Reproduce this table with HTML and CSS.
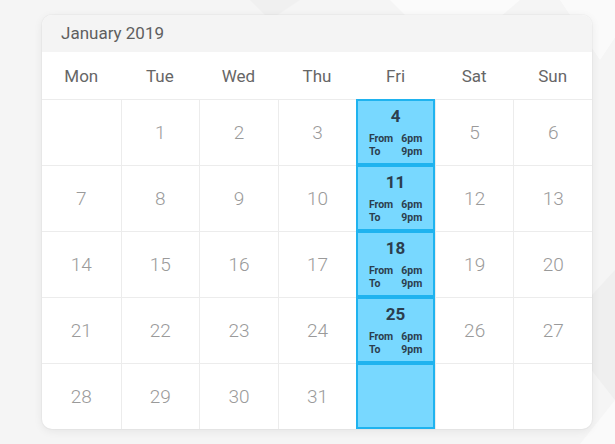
FILE: index.html
```html
<!DOCTYPE html>
<html lang="en">
<head>
<meta charset="utf-8">
<title>January 2019</title>
<link rel="stylesheet" href="styles.css">
</head>
<body>
<div class="card">
  <div class="card-header">January 2019</div>
  <div class="weekdays">
    <div>Mon</div><div>Tue</div><div>Wed</div><div>Thu</div><div>Fri</div><div>Sat</div><div>Sun</div>
  </div>
  <div class="grid">
    <div class="cell"></div>
    <div class="cell">1</div>
    <div class="cell">2</div>
    <div class="cell">3</div>
    <div class="cell event"><span class="ev-date">4</span><span class="ev-time"><span>From</span><span>6pm</span><span>To</span><span>9pm</span></span></div>
    <div class="cell">5</div>
    <div class="cell">6</div>

    <div class="cell">7</div>
    <div class="cell">8</div>
    <div class="cell">9</div>
    <div class="cell">10</div>
    <div class="cell event"><span class="ev-date">11</span><span class="ev-time"><span>From</span><span>6pm</span><span>To</span><span>9pm</span></span></div>
    <div class="cell">12</div>
    <div class="cell">13</div>

    <div class="cell">14</div>
    <div class="cell">15</div>
    <div class="cell">16</div>
    <div class="cell">17</div>
    <div class="cell event"><span class="ev-date">18</span><span class="ev-time"><span>From</span><span>6pm</span><span>To</span><span>9pm</span></span></div>
    <div class="cell">19</div>
    <div class="cell">20</div>

    <div class="cell">21</div>
    <div class="cell">22</div>
    <div class="cell">23</div>
    <div class="cell">24</div>
    <div class="cell event"><span class="ev-date">25</span><span class="ev-time"><span>From</span><span>6pm</span><span>To</span><span>9pm</span></span></div>
    <div class="cell">26</div>
    <div class="cell">27</div>

    <div class="cell">28</div>
    <div class="cell">29</div>
    <div class="cell">30</div>
    <div class="cell">31</div>
    <div class="cell event"></div>
    <div class="cell"></div>
    <div class="cell"></div>
  </div>
</div>
</body>
</html>
```

FILE: styles.css
```css
* { box-sizing: border-box; }

html, body {
  margin: 0;
  height: 100%;
}

body {
  font-family: Roboto, "Liberation Sans", sans-serif;
  background-color: #f5f5f5;
  background-image: url("data:image/svg+xml,%3Csvg xmlns='http://www.w3.org/2000/svg' width='615' height='444'%3E%3Cpolygon points='390,0 450,60 520,0' fill='%23fbfbfb'/%3E%3Cpolygon points='250,0 300,0 270,20' fill='%23f0f0f0'/%3E%3Cpolygon points='640,0 560,0 600,60' fill='%23fafafa'/%3E%3Cpolygon points='615,270 560,330 615,400' fill='%23efefef'/%3E%3Cpolygon points='615,400 580,444 615,444' fill='%23fafafa'/%3E%3C/svg%3E");
  background-repeat: no-repeat;
  padding: 15px 0 0 42px;
}

.card {
  width: 550px;
  background: #fff;
  border-radius: 10px;
  overflow: hidden;
  box-shadow: 0 2px 10px rgba(0, 0, 0, 0.07), 0 0 0 1px rgba(0, 0, 0, 0.025);
}

.card-header {
  height: 37px;
  background: #f4f4f4;
  color: #5f5f5f;
  font-size: 17px;
  line-height: 37px;
  padding-left: 19px;
}

.weekdays {
  display: grid;
  grid-template-columns: repeat(7, 1fr);
  height: 47px;
  align-items: center;
  text-align: center;
  color: #666;
  font-size: 17px;
}

.grid {
  display: grid;
  grid-template-columns: repeat(7, 1fr);
  grid-auto-rows: 66px;
}

.cell {
  border-top: 1px solid #ececec;
  border-left: 1px solid #ececec;
  display: flex;
  align-items: center;
  justify-content: center;
  color: #9a9a9a;
  font-size: 19px;
  font-weight: 300;
}

.cell:nth-child(7n+1) {
  border-left: none;
}

.cell.event {
  background: #78d8ff;
  border: 2px solid #1fb3ef;
  flex-direction: column;
  justify-content: flex-start;
  padding-top: 5px;
  color: #2c3e4e;
}

.ev-date {
  font-size: 17px;
  font-weight: 700;
  line-height: 20px;
}

.ev-time {
  display: grid;
  grid-template-columns: auto auto;
  column-gap: 8px;
  font-size: 10.5px;
  font-weight: 700;
  line-height: 13px;
  margin-top: 6px;
}
```
